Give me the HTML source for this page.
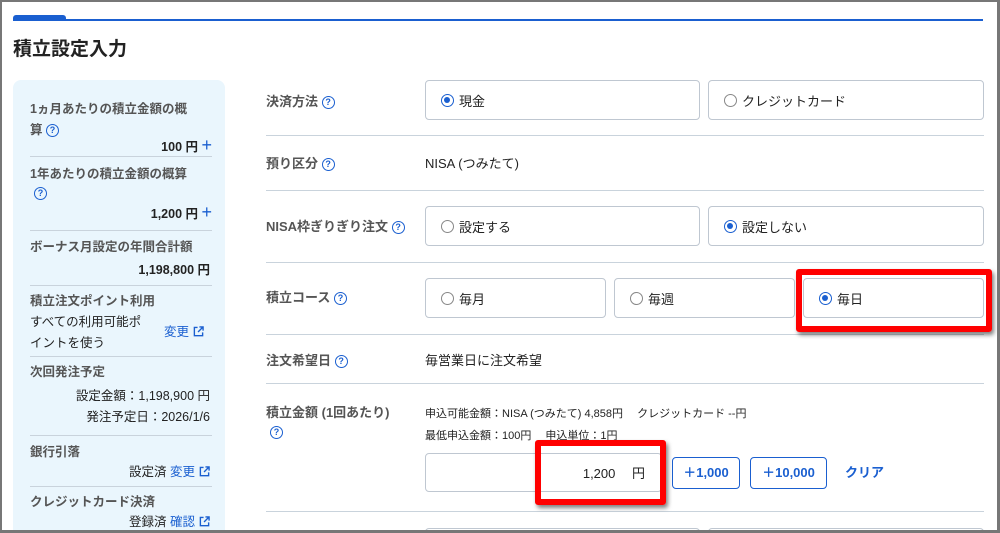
<!DOCTYPE html>
<html><head><meta charset="utf-8"><style>
*{box-sizing:border-box;margin:0;padding:0}
html,body{width:1000px;height:533px;overflow:hidden}
body{background:#777;font-family:"Liberation Sans","Noto Sans CJK JP",sans-serif;color:#333;position:relative}
.page{position:absolute;left:2px;top:2px;width:995px;height:528px;background:#fff;overflow:hidden}
.a{position:absolute;white-space:nowrap}
.q{display:inline-block;width:13px;height:13px;border:1.5px solid #1a5fd0;border-radius:50%;color:#1a5fd0;font-size:9px;line-height:10px;text-align:center;font-weight:bold;vertical-align:middle}
.side{position:absolute;left:11px;top:78px;width:212px;height:460px;background:#eaf6fd;border-radius:8px}
.st{font-size:12.5px;color:#555;font-weight:bold}
.sv{font-size:12.5px;color:#222}
.hr{position:absolute;height:1px;background:#c9d3dc}
.lab{font-size:13px;font-weight:bold;color:#555}
.btn{position:absolute;border:1px solid #bfc7d1;border-radius:4px;background:#fff;font-size:13px;color:#222;padding-left:15px;display:flex;align-items:center}
.r{display:inline-block;width:13px;height:13px;border:1.5px solid #888;border-radius:50%;margin-right:5px;position:relative}
.r.on{border-color:#1a5fd0}
.r.on:after{content:"";position:absolute;left:2px;top:2px;width:6px;height:6px;border-radius:50%;background:#1a5fd0}
.red{position:absolute;border:6px solid #f00;border-radius:3px;box-shadow:2px 3px 4px rgba(0,0,0,.5)}
.pb{position:absolute;border:1px solid #1a5fd0;border-radius:4px;color:#1a5fd0;font-size:13px;font-weight:bold;text-align:center;line-height:30px}
.ext{display:inline-block;width:11px;height:11px;margin-left:4px;vertical-align:-1px}
.blue{color:#1a5fd0}
</style></head><body><div class="page">
<div class="a" style="left:11px;top:17px;width:970px;height:2px;background:#1a5fd0"></div>
<div class="a" style="left:11px;top:13px;width:53px;height:5px;background:#1a5fd0;border-radius:3px 3px 0 0"></div>
<div class="a" style="left:11px;top:32px;font-size:19px;font-weight:bold;color:#222">積立設定入力</div>

<div class="side"></div>
<div class="a st" style="left:28px;top:96px">1ヵ月あたりの積立金額の概</div>
<div class="a st" style="left:28px;top:117px">算 <span class="q">?</span></div>
<div class="a sv" style="right:785px;top:133px;font-weight:bold">100 円 <span class="blue" style="font-size:18px;font-weight:normal">+</span></div>
<div class="hr" style="left:28px;top:154px;width:182px"></div>
<div class="a st" style="left:28px;top:161px">1年あたりの積立金額の概算</div>
<div class="a" style="left:32px;top:183px"><span class="q">?</span></div>
<div class="a sv" style="right:785px;top:200px;font-weight:bold">1,200 円 <span class="blue" style="font-size:18px;font-weight:normal">+</span></div>
<div class="hr" style="left:28px;top:228px;width:182px"></div>
<div class="a st" style="left:28px;top:234px">ボーナス月設定の年間合計額</div>
<div class="a sv" style="right:787px;top:257px;font-weight:bold">1,198,800 円</div>
<div class="hr" style="left:28px;top:283px;width:182px"></div>
<div class="a st" style="left:28px;top:288px">積立注文ポイント利用</div>
<div class="a sv" style="left:28px;top:309px">すべての利用可能ポ</div>
<div class="a sv" style="left:28px;top:330px">イントを使う</div>
<div class="a sv blue" style="left:162px;top:319px">変更<svg class="ext" viewBox="0 0 12 12"><path d="M5 1.5H1.5v9h9V7M7 1h4v4M11 1 5.5 6.5" fill="none" stroke="#1a5fd0" stroke-width="1.5"/></svg></div>
<div class="hr" style="left:28px;top:354px;width:182px"></div>
<div class="a st" style="left:28px;top:359px">次回発注予定</div>
<div class="a sv" style="right:787px;top:383px">設定金額：1,198,900 円</div>
<div class="a sv" style="right:787px;top:404px">発注予定日：2026/1/6</div>
<div class="hr" style="left:28px;top:433px;width:182px"></div>
<div class="a st" style="left:28px;top:439px">銀行引落</div>
<div class="a sv" style="right:787px;top:459px">設定済 <span class="blue">変更<svg class="ext" viewBox="0 0 12 12"><path d="M5 1.5H1.5v9h9V7M7 1h4v4M11 1 5.5 6.5" fill="none" stroke="#1a5fd0" stroke-width="1.5"/></svg></span></div>
<div class="hr" style="left:28px;top:484px;width:182px"></div>
<div class="a st" style="left:28px;top:489px">クレジットカード決済</div>
<div class="a sv" style="right:787px;top:509px">登録済 <span class="blue">確認<svg class="ext" viewBox="0 0 12 12"><path d="M5 1.5H1.5v9h9V7M7 1h4v4M11 1 5.5 6.5" fill="none" stroke="#1a5fd0" stroke-width="1.5"/></svg></span></div>

<div class="a lab" style="left:264px;top:89px">決済方法 <span class="q">?</span></div>
<div class="btn" style="left:423px;top:78px;width:275px;height:40px"><span class="r on"></span>現金</div>
<div class="btn" style="left:706px;top:78px;width:276px;height:40px"><span class="r"></span>クレジットカード</div>
<div class="hr" style="left:264px;top:133px;width:718px"></div>
<div class="a lab" style="left:264px;top:151px">預り区分 <span class="q">?</span></div>
<div class="a" style="left:423px;top:151px;font-size:13px;color:#222">NISA (つみたて)</div>
<div class="hr" style="left:264px;top:188px;width:718px"></div>
<div class="a lab" style="left:264px;top:214px">NISA枠ぎりぎり注文 <span class="q">?</span></div>
<div class="btn" style="left:423px;top:204px;width:275px;height:40px"><span class="r"></span>設定する</div>
<div class="btn" style="left:706px;top:204px;width:276px;height:40px"><span class="r on"></span>設定しない</div>
<div class="hr" style="left:264px;top:260px;width:718px"></div>
<div class="a lab" style="left:264px;top:285px">積立コース <span class="q">?</span></div>
<div class="btn" style="left:423px;top:276px;width:181px;height:40px"><span class="r"></span>毎月</div>
<div class="btn" style="left:612px;top:276px;width:181px;height:40px"><span class="r"></span>毎週</div>
<div class="btn" style="left:801px;top:276px;width:181px;height:40px"><span class="r on"></span>毎日</div>
<div class="hr" style="left:264px;top:332px;width:718px"></div>
<div class="a lab" style="left:264px;top:348px">注文希望日 <span class="q">?</span></div>
<div class="a" style="left:423px;top:348px;font-size:13px;color:#222">毎営業日に注文希望</div>
<div class="hr" style="left:264px;top:381px;width:718px"></div>
<div class="a lab" style="left:264px;top:400px">積立金額 (1回あたり)</div>
<div class="a" style="left:268px;top:422px"><span class="q">?</span></div>
<div class="a" style="left:423px;top:403px;font-size:11px;color:#222">申込可能金額：NISA (つみたて) 4,858円　 クレジットカード --円</div>
<div class="a" style="left:423px;top:425px;font-size:11px;color:#222">最低申込金額：100円　 申込単位：1円</div>
<div class="btn" style="left:423px;top:451px;width:237px;height:39px;justify-content:flex-end;padding-right:16px">1,200 　円</div>
<div class="pb" style="left:670px;top:455px;width:68px;height:32px">＋1,000</div>
<div class="pb" style="left:748px;top:455px;width:77px;height:32px">＋10,000</div>
<div class="a" style="left:843px;top:460px;font-size:13px;font-weight:bold;color:#1a5fd0">クリア</div>
<div class="hr" style="left:264px;top:509px;width:718px"></div>
<div class="btn" style="left:423px;top:526px;width:275px;height:40px"></div>
<div class="btn" style="left:706px;top:526px;width:276px;height:40px"></div>
<div class="red" style="left:794px;top:267px;width:196px;height:63px"></div>
<div class="red" style="left:533px;top:438px;width:131px;height:65px"></div>
</div></body></html>
